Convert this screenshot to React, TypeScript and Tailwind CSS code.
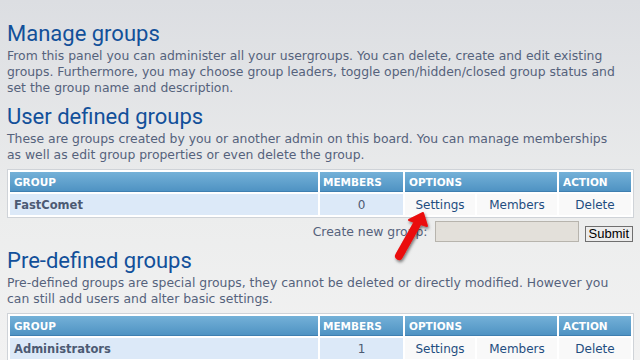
import React from 'react';

type Row = { name: string; members: number };

const GroupTable: React.FC<{ rows: Row[] }> = ({ rows }) => (
  <table className="w-[627px] table-fixed border-separate border-spacing-[2px] border border-[#cfd3d8] bg-white text-[12px] leading-[14px]">
    <colgroup>
      <col className="w-[308px]" />
      <col className="w-[83px]" />
      <col className="w-[70px]" />
      <col className="w-[80px]" />
      <col className="w-[72px]" />
    </colgroup>
    <thead>
      <tr className="h-[20px] text-left text-[10.5px] font-bold uppercase text-white">
        <th className="border-b border-[#3f7fb0] bg-gradient-to-b from-[#74b1d8] to-[#4f93c3] px-[4px] py-0 font-bold">Group</th>
        <th className="border-b border-[#3f7fb0] bg-gradient-to-b from-[#74b1d8] to-[#4f93c3] px-[3px] py-0 font-bold">Members</th>
        <th colSpan={2} className="border-b border-[#3f7fb0] bg-gradient-to-b from-[#74b1d8] to-[#4f93c3] px-[4px] py-0 font-bold">Options</th>
        <th className="border-b border-[#3f7fb0] bg-gradient-to-b from-[#74b1d8] to-[#4f93c3] px-[4px] py-0 font-bold">Action</th>
      </tr>
    </thead>
    <tbody>
      {rows.map((r) => (
        <tr key={r.name} className="h-[21px]">
          <td className="bg-[#dce9f8] px-[4px] py-0 text-[11.5px] font-bold text-[#4c5a73]">{r.name}</td>
          <td className="bg-[#dce9f8] py-0 text-center text-[#4c5a73]">{r.members}</td>
          <td className="bg-[#f9f9f9] py-0 text-center text-[#1f4d80]">Settings</td>
          <td className="bg-[#f9f9f9] py-0 text-center text-[#1f4d80]">Members</td>
          <td className="bg-[#f9f9f9] py-0 text-center text-[#1f4d80]">Delete</td>
        </tr>
      ))}
    </tbody>
  </table>
);

const App: React.FC = () => {
  return (
    <div className="relative h-[360px] w-[640px] overflow-hidden bg-gradient-to-b from-[#dcdee2] via-[#eceded] via-60% to-[#f2f2f2] font-['DejaVu_Sans',Verdana,sans-serif] text-[12.4px] leading-[16px] text-[#55627c]">
      <div className="px-[7px] pt-[19px]">
        <h1 className="font-['Roboto',sans-serif] text-[22px] leading-[29px] text-[#12509a]">Manage groups</h1>
        <p>
          From this panel you can administer all your usergroups. You can delete, create and edit existing<br />
          groups. Furthermore, you may choose group leaders, toggle open/hidden/closed group status and<br />
          set the group name and description.
        </p>

        <h2 className="mt-[6px] font-['Roboto',sans-serif] text-[22px] leading-[29px] text-[#12509a]">User defined groups</h2>
        <p>
          These are groups created by you or another admin on this board. You can manage memberships<br />
          as well as edit group properties or even delete the group.
        </p>

        <div className="mt-[6px]">
          <GroupTable rows={[{ name: 'FastComet', members: 0 }]} />
        </div>

        <div className="mt-[3px] flex items-center justify-end">
          <span className="mr-[7px]">Create new group:</span>
          <input className="h-[21px] w-[144px] border border-[#b7b4ad] bg-[#e3e0da]" />
          <button className="ml-[6px] mt-[4px] h-[16px] border border-[#6f6f6f] bg-[#ececec] px-[3px] font-['Liberation_Sans',Arial,sans-serif] text-[13px] leading-[13px] text-black">Submit</button>
        </div>

        <h2 className="mt-[4px] font-['Roboto',sans-serif] text-[22px] leading-[29px] text-[#12509a]">Pre-defined groups</h2>
        <p>
          Pre-defined groups are special groups, they cannot be deleted or directly modified. However you<br />
          can still add users and alter basic settings.
        </p>

        <div className="mt-[6px]">
          <GroupTable rows={[{ name: 'Administrators', members: 1 }]} />
        </div>
      </div>

      <svg className="pointer-events-none absolute left-[385px] top-[205px]" width="60" height="65" viewBox="0 0 60 65">
        <defs>
          <filter id="sh" x="-30%" y="-30%" width="160%" height="160%">
            <feDropShadow dx="1" dy="2" stdDeviation="1.5" floodColor="#000" floodOpacity="0.5" />
          </filter>
        </defs>
        <g filter="url(#sh)">
          <line x1="14" y1="51" x2="32" y2="19" stroke="#ea0a0a" strokeWidth="8" strokeLinecap="round" />
          <polygon points="38,8 24,15 42,21" fill="#ea0a0a" stroke="#ea0a0a" strokeWidth="2" strokeLinejoin="round" />
        </g>
      </svg>
    </div>
  );
};

export default App;
